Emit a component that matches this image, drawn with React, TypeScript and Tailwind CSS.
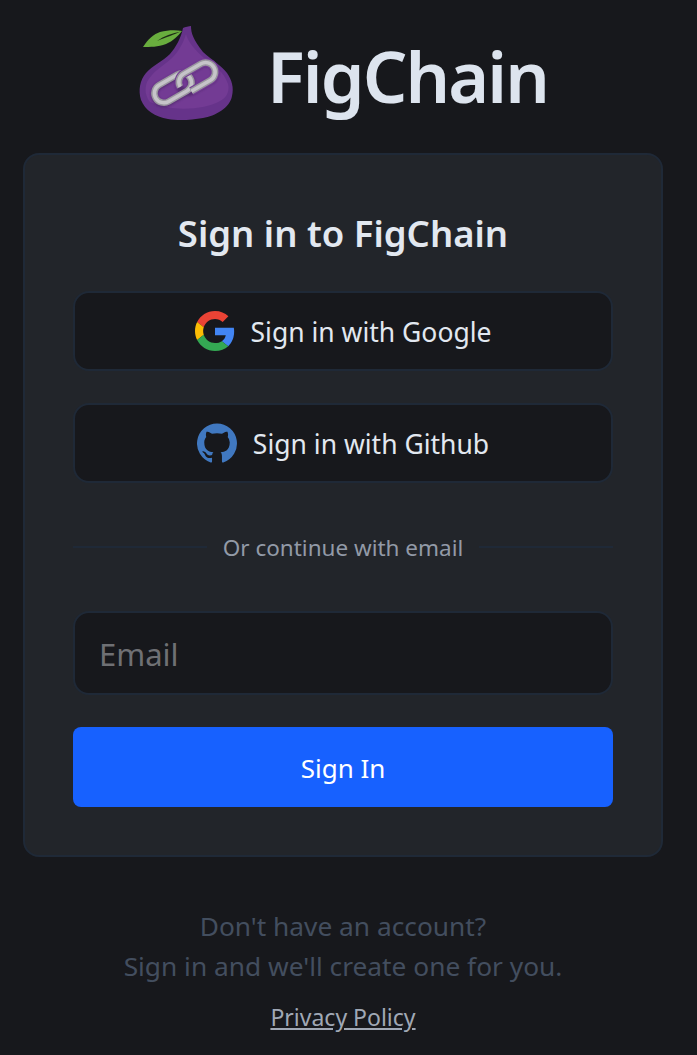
export default function App() {
  return (
    <div className="min-h-[1055px] bg-[#17181c] font-['Noto_Sans',sans-serif] overflow-hidden">
      <div className="w-[686px] flex flex-col items-center">
        <div className="h-[153px] flex items-center justify-center gap-[33px] w-full">
          <svg width="96" height="96" viewBox="138 25 96 96" className="mt-[-7px]">
            <defs>
              <filter id="soft" x="-20%" y="-20%" width="140%" height="140%">
                <feGaussianBlur stdDeviation="0.7" />
              </filter>
              <filter id="soft2" x="-20%" y="-20%" width="140%" height="140%">
                <feGaussianBlur stdDeviation="1.2" />
              </filter>
            </defs>
            <path d="M183 28 C185 27 189 26 191 26 C191 33 193 39 203 52 C212 60 222 66 227 73 C232 80 234 88 232 96 C230 108 215 116 203 118 C192 120 178 121 168 119 C155 117 145 110 141 100 C138 90 140 80 146 73 C152 66 163 61 170 54 C176 47 181 38 183 28 Z" fill="#66338a" />
            <path d="M186 34 C188 42 195 50 204 58 C214 65 224 72 228 84 C230 92 226 98 220 101 C205 110 170 112 150 102 C146 97 144 90 147 82 C152 72 163 66 172 58 C178 52 183 44 186 34 Z" fill="#733b94" />
            <path d="M143 47 C148 39 154 34 160 32 C168 30 176 30 182 31 C178 36 173 41 166 44 C158 47 150 47 143 47 Z" fill="#69ad3e" />
            <path d="M157 41 C164 36 172 33 181 31.5 C174 34.5 167 37 157 41 Z" fill="#1d2a16" />
            <g filter="url(#soft2)" fill="none" stroke="#4a2763" strokeWidth="7" opacity="0.7">
              <rect x="153" y="79.5" width="40" height="19" rx="9.5" transform="rotate(-30 173 89)" />
              <rect x="177" y="68.5" width="40" height="19" rx="9.5" transform="rotate(-30 197 78)" />
            </g>
            <g filter="url(#soft)" fill="none">
              <rect x="153" y="78.5" width="40" height="19" rx="9.5" stroke="#9a979f" strokeWidth="6.5" transform="rotate(-30 173 88)" />
              <rect x="153" y="78.5" width="40" height="19" rx="9.5" stroke="#c6c4c9" strokeWidth="3.5" transform="rotate(-30 173 88)" />
              <g transform="rotate(-30 197 77)">
                <path d="M185 86.5 L207 86.5 A9.5 9.5 0 0 0 207 67.5 L187 67.5 A9.5 9.5 0 0 0 177.5 77" stroke="#733b94" strokeWidth="8.5" />
                <path d="M185 86.5 L207 86.5 A9.5 9.5 0 0 0 207 67.5 L187 67.5 A9.5 9.5 0 0 0 177.5 77" stroke="#9a979f" strokeWidth="6.5" />
                <path d="M185 86.5 L207 86.5 A9.5 9.5 0 0 0 207 67.5 L187 67.5 A9.5 9.5 0 0 0 177.5 77" stroke="#c6c4c9" strokeWidth="3.5" />
              </g>
            </g>
          </svg>
          <span className="mb-[2px] text-[70px] font-semibold leading-none text-[#dde4ee] tracking-[-1.9px]">FigChain</span>
        </div>
        <div className="w-[640px] h-[704px] rounded-[16px] border-2 border-[#1f2937] bg-[#22252a] px-[48px] pt-[48px] flex flex-col">
          <h1 className="text-[36.5px] leading-[60px] font-semibold text-[#e2e8f0] text-center">Sign in to FigChain</h1>
          <div className="mt-[28px] flex flex-col gap-[32px]">
            <button className="h-[80px] rounded-[16px] border-2 border-[#1f2937] bg-[#17181c] flex items-center justify-center gap-[16px] text-[26.5px] text-[#e2e8f0]">
              <svg width="40" height="40" viewBox="0 0 48 48">
                <path fill="#EA4335" d="M24 9.5c3.54 0 6.71 1.22 9.21 3.6l6.85-6.85C35.9 2.38 30.47 0 24 0 14.62 0 6.51 5.38 2.56 13.22l7.98 6.19C12.43 13.72 17.74 9.5 24 9.5z" />
                <path fill="#4285F4" d="M46.98 24.55c0-1.57-.15-3.09-.38-4.55H24v9.02h12.94c-.58 2.96-2.26 5.48-4.78 7.18l7.73 6c4.51-4.18 7.09-10.36 7.09-17.65z" />
                <path fill="#FBBC05" d="M10.53 28.59c-.48-1.45-.76-2.99-.76-4.59s.27-3.14.76-4.59l-7.98-6.19C.92 16.46 0 20.12 0 24c0 3.88.92 7.54 2.56 10.78l7.97-6.19z" />
                <path fill="#34A853" d="M24 48c6.48 0 11.93-2.13 15.89-5.81l-7.73-6c-2.15 1.45-4.92 2.3-8.16 2.3-6.26 0-11.57-4.22-13.47-9.91l-7.98 6.19C6.51 42.62 14.62 48 24 48z" />
              </svg>
              <span className="pt-[4px]">Sign in with Google</span>
            </button>
            <button className="h-[80px] rounded-[16px] border-2 border-[#1f2937] bg-[#17181c] flex items-center justify-center gap-[16px] text-[26.5px] text-[#e2e8f0]">
              <svg width="40" height="40" viewBox="0 0 24 24">
                <path fill="#4078c0" d="M12 .3a12 12 0 0 0-3.8 23.38c.6.12.83-.26.83-.57v-2.23c-3.34.73-4.04-1.42-4.04-1.42-.55-1.39-1.34-1.76-1.34-1.76-1.08-.74.09-.73.09-.73 1.2.09 1.83 1.24 1.83 1.24 1.07 1.83 2.81 1.3 3.5 1 .1-.78.42-1.3.76-1.6-2.67-.31-5.47-1.34-5.47-5.93 0-1.31.47-2.38 1.24-3.22-.14-.3-.54-1.52.1-3.18 0 0 1-.32 3.3 1.23a11.5 11.5 0 0 1 6 0c2.28-1.55 3.29-1.23 3.29-1.23.64 1.66.24 2.88.12 3.18a4.65 4.65 0 0 1 1.23 3.22c0 4.61-2.8 5.62-5.48 5.92.42.36.81 1.1.81 2.22v3.29c0 .31.2.69.82.57A12 12 0 0 0 12 .3" />
              </svg>
              <span className="pt-[4px]">Sign in with Github</span>
            </button>
          </div>
          <div className="mt-[48px] flex items-center gap-[16px] h-[32px]">
            <div className="flex-1 h-[2px] bg-[#1f2937]" />
            <span className="pt-[2px] text-[22.5px] text-[#929aa7]">Or continue with email</span>
            <div className="flex-1 h-[2px] bg-[#1f2937]" />
          </div>
          <div className="mt-[48px] h-[84px] rounded-[16px] border-2 border-[#1f2937] bg-[#17181c] pl-[24px] pr-[25px] pt-[2px] flex items-center">
            <input placeholder="Email" className="w-full bg-transparent outline-none text-[31px] placeholder:text-[#6f7074]" />
          </div>
          <button className="mt-[32px] h-[80px] pt-[2px] rounded-[8px] bg-[#1761ff] text-[26px] text-white">Sign In</button>
        </div>
        <div className="mt-[49px] text-center text-[26.3px] leading-[40px] text-[#434e5f]">
          <p>Don't have an account?</p>
          <p>Sign in and we'll create one for you.</p>
        </div>
        <a className="mt-[15px] text-[23px] leading-[32px] text-[#a0a8b5] underline">Privacy Policy</a>
      </div>
    </div>
  );
}
